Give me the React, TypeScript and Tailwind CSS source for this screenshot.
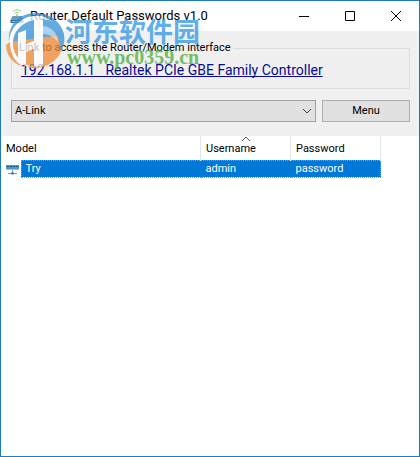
import { useState } from "react";

type Login = {
  model: string;
  username: string;
  password: string;
};

const brands = ["A-Link"];

const logins: Login[] = [{ model: "Try", username: "admin", password: "password" }];

const RouterIcon = () => (
  <svg className="h-4 w-4" viewBox="0 0 16 16" fill="none" aria-hidden="true">
    <path d="M4 3.5a5.5 5.5 0 0 1 8 0M5.5 5.5a3.4 3.4 0 0 1 5 0" stroke="#8fd67c" />
    <circle cx="8" cy="7" r="1" fill="#8fd67c" />
    <path d="M3.5 8h9l2 4h-13z" fill="#6f9cb8" />
    <path d="M1.5 12h13v3h-13z" fill="#33688e" />
    <path d="M3 13.5h6" stroke="#a9cbe0" />
  </svg>
);

const ModemIcon = () => (
  <svg className="h-4 w-4" viewBox="0 0 16 16" fill="none" aria-hidden="true">
    <path d="M1 4h13v4H1z" fill="#4f97c8" />
    <path d="M2 5.5h11" stroke="#1c5580" strokeDasharray="2 1" />
    <path d="M1 8.5h13" stroke="#9cc6e0" />
    <path d="M7.5 9v4M3 12.5h9" stroke="#5fa3bd" />
    <path d="M6 11.500h3v2H6z" fill="#3b7fae" />
  </svg>
);

const SiteMark = () => (
  <div className="pointer-events-none absolute left-1 top-2 flex items-start opacity-75">
    <svg className="h-[60px] w-[60px]" viewBox="0 0 60 60" aria-hidden="true">
      <path d="M4 34C2 16 14 4 31 4c14 0 25 9 28 22 1 5 0 9-1 12z" fill="#2f8fd8" />
      <path d="M4 33l54-7c3 16-8 31-26 33C18 60 7 50 4 33z" fill="#ef8a33" />
      <path d="M52 13c5 5 7 11 7 17-1 5-2 8-4 11 0-12-4-20-11-26z" fill="#2f8fd8" />
      <path d="M47 12C34 8 22 11 14 19 7 26 6 38 11 46c4 6 10 10 17 12-9 0-17-5-21-12C1 35 4 21 14 13 24 5 37 5 47 12z" fill="#fff" />
      <path d="M13 24l8-3v14l8-3V10l9-3v50l-9 1V40l-8 3v14l-8-6z" fill="#fff" />
      <path d="M38 17c9 1 14 7 15 16-4-5-9-8-15-8z" fill="#fff" opacity="0.5" />
      <path d="M5 33c0 11 4 19 12 24C8 55 1 46 1 36z" fill="#ef8a33" />
    </svg>
    <div className="flex flex-col whitespace-nowrap pt-2 font-bold">
      <span className="font-['Noto_Sans_CJK_SC',sans-serif] text-[27px] leading-7 text-[#2f95e2]">河东软件园</span>
      <span className="pl-0.5 font-['Liberation_Serif',serif] text-[20px] leading-6 text-[#48ad38]">www.pc0359.cn</span>
    </div>
  </div>
);

export default function App() {
  const [brand, setBrand] = useState(brands[0]);

  return (
    <main className="relative flex min-h-screen flex-col border border-[#1f7ac0] bg-white font-['Roboto',sans-serif] text-[11px] text-black">
      <header className="flex h-[30px] items-center">
        <div className="flex flex-1 items-center gap-1 pl-2">
          <RouterIcon />
          <h1 className="pl-px text-[13px]">Router Default Passwords v1.0</h1>
        </div>
        <button type="button" aria-label="Minimize" className="flex h-full w-[46px] items-center justify-center">
          <svg className="h-3 w-3" viewBox="0 0 12 12">
            <path d="M1 6.500h10" stroke="#000" />
          </svg>
        </button>
        <button type="button" aria-label="Maximize" className="flex h-full w-[46px] items-center justify-center">
          <svg className="h-3 w-3" viewBox="0 0 12 12" fill="none">
            <path d="M1.500 1.500h9v9h-9z" stroke="#000" />
          </svg>
        </button>
        <button type="button" aria-label="Close" className="flex h-full w-[46px] items-center justify-center">
          <svg className="h-3 w-3" viewBox="0 0 12 12">
            <path d="M1 1l10 10M11 1L1 11" stroke="#000" />
          </svg>
        </button>
      </header>

      <section className="bg-[#f0f0f0] pb-3.5 pl-2.5 pr-[9px] pt-[9px]">
        <fieldset className="border border-[#dcdcdc] px-[7px] pb-1.5 pt-0.5">
          <legend className="pr-0.5 leading-4">Link to access the Router/Modem interface</legend>
          <a
            href="http://192.168.1.1"
            className="block whitespace-pre pl-0.5 text-[14px] leading-6 text-[#0a0a96] underline [text-decoration-skip-ink:none]"
          >
            {"192.168.1.1   Realtek PCIe GBE Family Controller"}
          </a>
        </fieldset>
        <div className="mt-[11px] flex gap-1.5">
          <div className="relative flex-1">
            <select
              aria-label="Router brand"
              value={brand}
              onChange={(e) => setBrand(e.target.value)}
              className="block h-[22px] w-full appearance-none border border-[#a0a0a0] bg-[#e1e1e1] px-[3px]"
            >
              {brands.map((name) => (
                <option key={name}>{name}</option>
              ))}
            </select>
            <svg className="pointer-events-none absolute right-1 top-[7px] h-2 w-2.5" viewBox="0 0 10 8" fill="none">
              <path d="M1 2l4 4 4-4" stroke="#404040" />
            </svg>
          </div>
          <button type="button" className="h-[22px] w-[88px] border border-[#adadad] bg-[#e1e1e1]">
            Menu
          </button>
        </div>
      </section>

      <div className="pr-[38px]">
        <table className="w-full table-fixed border-collapse text-left">
          <colgroup>
            <col className="w-5" />
            <col />
            <col className="w-[90px]" />
            <col className="w-[90px]" />
          </colgroup>
          <thead>
            <tr className="h-6">
              <th colSpan={2} className="p-0 pl-[5px] pt-0.5 font-normal">
                Model
              </th>
              <th className="relative border-l border-[#e5e5e5] p-0 pl-[5px] pt-0.5 font-normal">
                <svg className="absolute left-[41px] top-0 h-1.5 w-2" viewBox="0 0 8 6" fill="none">
                  <path d="M0 5l4-4 4 4" stroke="#606060" />
                </svg>
                Username
              </th>
              <th className="border-x border-[#e5e5e5] p-0 pl-[5px] pt-0.5 font-normal">Password</th>
            </tr>
          </thead>
          <tbody>
            {logins.map((login) => (
              <tr key={login.model} className="h-[17px] leading-4 text-white">
                <td className="p-0 pl-1">
                  <ModemIcon />
                </td>
                <td className="border-y border-l border-dotted border-[#c98a52] bg-[#0078d7] p-0 pl-1">{login.model}</td>
                <td className="border-y border-dotted border-[#c98a52] bg-[#0078d7] p-0 pl-[5px]">{login.username}</td>
                <td className="border-y border-r border-dotted border-[#c98a52] bg-[#0078d7] p-0 pl-[5px]">
                  {login.password}
                </td>
              </tr>
            ))}
          </tbody>
        </table>
      </div>

      <SiteMark />
    </main>
  );
}
